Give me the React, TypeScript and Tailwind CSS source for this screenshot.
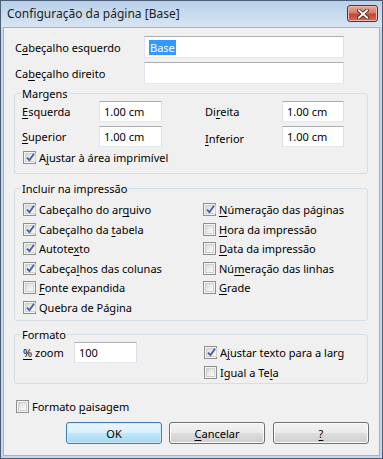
import React from "react";

function U({ children }: { children: React.ReactNode }) {
  return <span className="underline decoration-1 underline-offset-[2px]">{children}</span>;
}

function Box({ checked }: { checked?: boolean }) {
  return (
    <span className="w-[13px] h-[13px] shrink-0 border border-[#8e8f8f] bg-[#f4f4f4] p-[1px] flex">
      <span className="flex-1 flex items-center justify-center bg-gradient-to-br from-[#d8d8d8] via-[#ececec] to-[#fbfbfb] border border-[#d0d0d0]">
        {checked && (
          <svg width="9" height="9" viewBox="0 0 9 9" className="overflow-visible">
            <path d="M1 4.6 L3.4 7.2 L8 0.8" fill="none" stroke="#4a5f9f" strokeWidth="1.9" strokeLinejoin="round" />
          </svg>
        )}
      </span>
    </span>
  );
}

function Check({ checked, children, className = "" }: { checked?: boolean; children: React.ReactNode; className?: string }) {
  return (
    <div className={"flex items-center gap-[3px] whitespace-nowrap " + className}>
      <Box checked={checked} />
      <span>{children}</span>
    </div>
  );
}

function Field({ value, className = "" }: { value?: React.ReactNode; className?: string }) {
  return (
    <div
      className={
        "bg-white border border-[#e3e9ef] border-t-[#abadb3] border-l-[#e2e3ea] border-r-[#dbdfe6] flex items-center pl-[4px] " +
        className
      }
    >
      {value}
    </div>
  );
}

function Btn({ children, def }: { children: React.ReactNode; def?: boolean }) {
  return (
    <div
      className={
        "w-[96px] h-[22px] rounded-[3px] border flex items-center justify-center " +
        (def
          ? "border-[#3c7fb1] bg-[linear-gradient(#eaf6fd_0%,#d9f0fc_50%,#bee6fd_51%,#a7d9f5_100%)] shadow-[inset_0_0_0_1px_#d0ecfb]"
          : "border-[#707070] bg-[linear-gradient(#f2f2f2_0%,#ebebeb_50%,#dddddd_51%,#cfcfcf_100%)] shadow-[inset_0_0_0_1px_#fcfcfc]")
      }
    >
      {children}
    </div>
  );
}

export default function App() {
  return (
    <div className="w-[383px] h-[459px] bg-[#c3d6ec] border border-[#4d5e74] flex flex-col font-['Noto_Sans',sans-serif] text-[11px] leading-[15px] text-black overflow-hidden">
      {/* Title bar */}
      <div className="h-[26px] shrink-0 flex items-start justify-between pl-[6px] pr-[4px] pt-[4px] bg-gradient-to-b from-[#b8d0ea] to-[#d8e5f3]">
        <span className="text-[12px] leading-[18px] text-[#1e1e1e]">Configuração da página [Base]</span>
        <div className="w-[31px] h-[17px] rounded-[3px] border border-[#6d2a22] bg-[linear-gradient(#e9a99b_0%,#d47c68_45%,#c24a33_55%,#cf6a4f_100%)] shadow-[inset_0_0_0_1px_#f0b9ae] flex items-center justify-center">
          <svg width="12" height="10" viewBox="0 0 12 10">
            <path d="M2 1.5 L10 8.5 M10 1.5 L2 8.5" stroke="#4a1a14" strokeWidth="3.6" strokeLinecap="square" />
            <path d="M2 1.5 L10 8.5 M10 1.5 L2 8.5" stroke="#ffffff" strokeWidth="2" strokeLinecap="square" />
          </svg>
        </div>
      </div>

      {/* Client */}
      <div className="flex-1 mx-[2px] mb-[2px] bg-[#f0f0f0] border border-[#9fb3cc] flex flex-col">
        <div className="flex items-center mt-[8px] pl-[11px]">
          <span className="w-[129px]">
            C<U>a</U>beçalho esquerdo
          </span>
          <Field
            className="w-[200px] h-[22px]"
            value={<span className="bg-[#3399ff] text-white px-[1px] leading-[15px]">Base</span>}
          />
        </div>
        <div className="flex items-center mt-[4px] pl-[11px]">
          <span className="w-[129px]">
            Ca<U>b</U>eçalho direito
          </span>
          <Field className="w-[200px] h-[22px]" />
        </div>

        {/* Margens */}
        <fieldset className="ml-[10px] mt-[2px] w-[354px] border border-[#d5dfe5] rounded-[3px] pl-[6px] pb-[8px]">
          <legend className="px-[1px]">Margens</legend>
          <div className="flex items-center h-[21px] pl-[1px]">
            <span className="w-[77px]">
              <U>E</U>squerda
            </span>
            <Field className="w-[63px] h-[21px]" value="1.00 cm" />
            <span className="w-[43px]" />
            <span className="w-[77px]">
              Di<U>r</U>eita
            </span>
            <Field className="w-[62px] h-[21px]" value="1.00 cm" />
          </div>
          <div className="flex items-center h-[21px] mt-[4px] pl-[1px]">
            <span className="w-[77px]">
              <U>S</U>uperior
            </span>
            <Field className="w-[63px] h-[21px]" value="1.00 cm" />
            <span className="w-[43px]" />
            <span className="w-[77px] pt-[3px]">
              <U>I</U>nferior
            </span>
            <Field className="w-[62px] h-[21px]" value="1.00 cm" />
          </div>
          <Check checked className="mt-[3px] h-[15px] pl-[2px]">
            A<U>j</U>ustar à área imprimível
          </Check>
        </fieldset>

        {/* Incluir na impressão */}
        <fieldset className="ml-[10px] mt-[7px] w-[354px] border border-[#d5dfe5] rounded-[3px] pl-[6px] pb-[3px]">
          <legend className="px-[1px]">Incluir na impressão</legend>
          <div className="flex pt-[4px]">
            <div className="w-[182px] flex flex-col pl-[2px]">
              <Check checked className="h-[19.5px]">
                Cabeçalho do ar<U>q</U>uivo
              </Check>
              <Check checked className="h-[19.5px]">
                Cabeçalho da <U>t</U>abela
              </Check>
              <Check checked className="h-[19.5px]">
                Autote<U>x</U>to
              </Check>
              <Check checked className="h-[19.5px]">
                Cabeça<U>l</U>hos das colunas
              </Check>
              <Check className="h-[19.5px]">
                <U>F</U>onte expandida
              </Check>
              <Check checked className="h-[19.5px]">
                Quebra de Página
              </Check>
            </div>
            <div className="flex-1 flex flex-col">
              <Check checked className="h-[19.5px]">
                <U>N</U>úmeração das páginas
              </Check>
              <Check className="h-[19.5px]">
                <U>H</U>ora da impressão
              </Check>
              <Check className="h-[19.5px]">
                <U>D</U>ata da impressão
              </Check>
              <Check className="h-[19.5px]">
                Nú<U>m</U>eração das linhas
              </Check>
              <Check className="h-[19.5px]">
                <U>G</U>rade
              </Check>
            </div>
          </div>
        </fieldset>

        {/* Formato */}
        <fieldset className="ml-[10px] mt-[6px] w-[354px] border border-[#d5dfe5] rounded-[3px] pl-[6px] pb-[3px]">
          <legend className="px-[1px]">Formato</legend>
          <div className="flex">
            <div className="w-[182px] flex items-start pl-[2px]">
              <div className="flex items-center h-[21px]">
                <span className="w-[51px]">
                  <U>%</U> zoom
                </span>
                <Field className="w-[63px] h-[21px]" value="100" />
              </div>
            </div>
            <div className="flex flex-col pl-[1px]">
              <div className="h-[21px] flex items-center">
                <Check checked className="w-[140px] overflow-hidden">
                  A<U>j</U>ustar texto para a largura
                </Check>
              </div>
              <Check className="h-[15px] mt-[2px]">
                Igual a Te<U>l</U>a
              </Check>
            </div>
          </div>
        </fieldset>

        <Check className="h-[15px] mt-[15px] pl-[12px]">
          Formato <U>p</U>aisagem
        </Check>

        <div className="flex mt-[8px] pl-[62px]">
          <Btn def>OK</Btn>
          <span className="w-[7px]" />
          <Btn>
            <U>C</U>ancelar
          </Btn>
          <span className="w-[8px]" />
          <Btn>
            <U>?</U>
          </Btn>
        </div>
      </div>
    </div>
  );
}
